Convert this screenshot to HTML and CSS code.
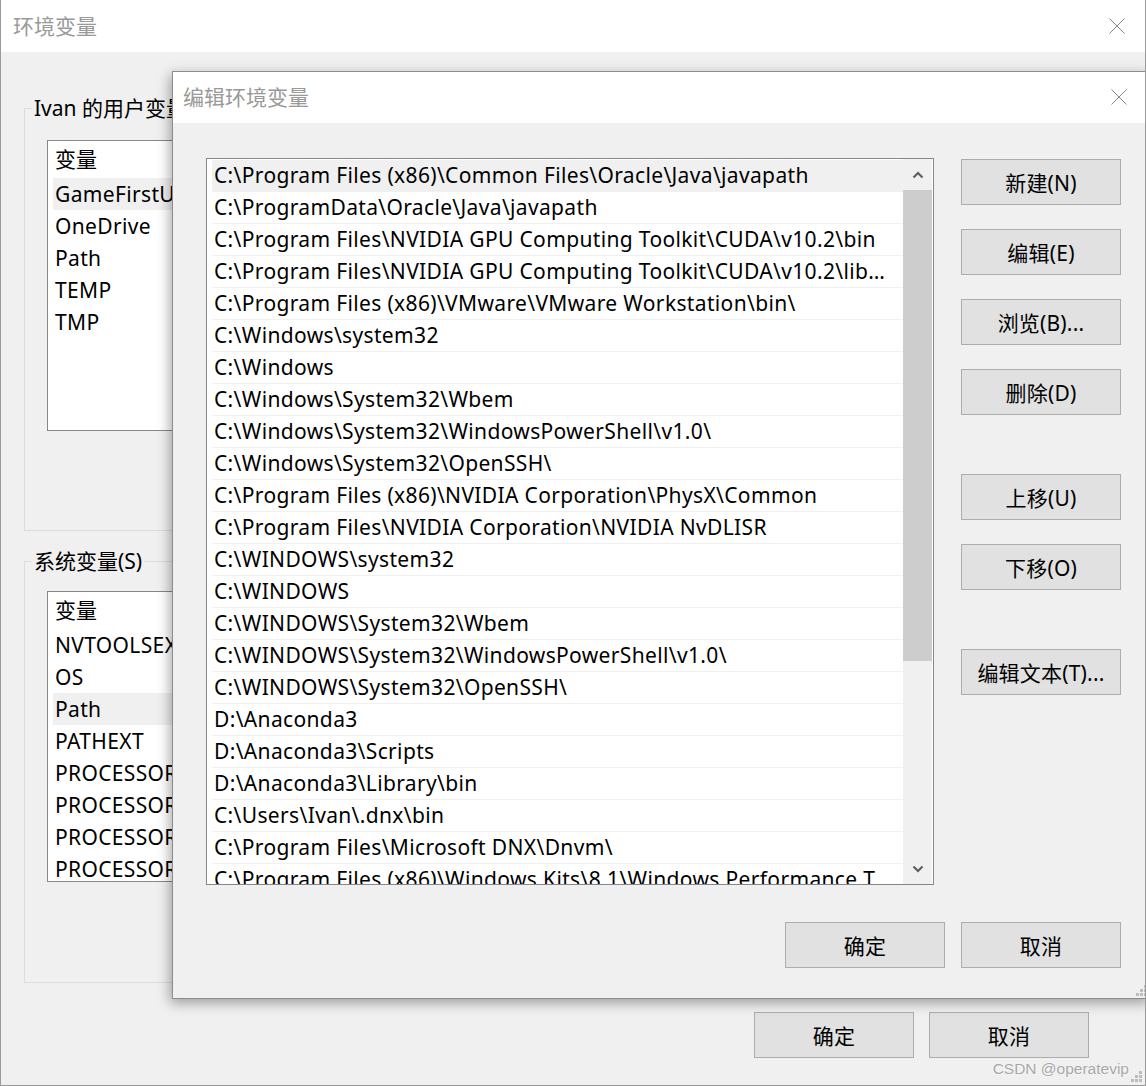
FILE: index.html
```html
<!DOCTYPE html>
<html lang="zh-CN">
<head>
<meta charset="utf-8">
<title>环境变量</title>
<link rel="stylesheet" href="styles.css">
</head>
<body>
<div class="win">
  <div class="titlebar">
    <span class="title">环境变量</span>
    <svg class="close" width="16" height="16" viewBox="0 0 16 16"><path d="M0.5 0.5 L15.5 15.5 M15.5 0.5 L0.5 15.5" stroke="#8a8a8a" stroke-width="1" fill="none"/></svg>
  </div>
  <div class="winbody">
    <div class="group g1">
      <div class="legend">Ivan 的用户变量(U)</div>
      <div class="vlist">
        <div class="vhead">变量</div>
        <div class="vrow sel">GameFirstUpdate</div>
        <div class="vrow">OneDrive</div>
        <div class="vrow">Path</div>
        <div class="vrow">TEMP</div>
        <div class="vrow">TMP</div>
      </div>
    </div>
    <div class="group g2">
      <div class="legend">系统变量(S)</div>
      <div class="vlist">
        <div class="vhead">变量</div>
        <div class="vrow">NVTOOLSEXT_PATH</div>
        <div class="vrow">OS</div>
        <div class="vrow sel">Path</div>
        <div class="vrow">PATHEXT</div>
        <div class="vrow">PROCESSOR_ARCHITECTURE</div>
        <div class="vrow">PROCESSOR_IDENTIFIER</div>
        <div class="vrow">PROCESSOR_LEVEL</div>
        <div class="vrow">PROCESSOR_REVISION</div>
      </div>
    </div>
    <div class="actions outer-actions">
      <button class="btn">确定</button>
      <button class="btn">取消</button>
    </div>
  </div>
  <svg class="grip grip-outer" width="14" height="14" viewBox="0 0 14 14"><g fill="#bdbdbd"><rect x="9" y="1" width="3" height="3"/><rect x="5" y="5" width="3" height="3"/><rect x="9" y="5" width="3" height="3"/><rect x="1" y="9" width="3" height="3"/><rect x="5" y="9" width="3" height="3"/><rect x="9" y="9" width="3" height="3"/></g></svg>
  <div class="watermark">CSDN @operatevip</div>

  <div class="dialog">
    <div class="titlebar dtitle">
      <span class="title">编辑环境变量</span>
      <svg class="close" width="16" height="16" viewBox="0 0 16 16"><path d="M0.5 0.5 L15.5 15.5 M15.5 0.5 L0.5 15.5" stroke="#8a8a8a" stroke-width="1" fill="none"/></svg>
    </div>
    <div class="dbody">
      <div class="plist">
        <div class="prows">
          <div class="prow sel">C:\Program Files (x86)\Common Files\Oracle\Java\javapath</div>
          <div class="prow">C:\ProgramData\Oracle\Java\javapath</div>
          <div class="prow">C:\Program Files\NVIDIA GPU Computing Toolkit\CUDA\v10.2\bin</div>
          <div class="prow">C:\Program Files\NVIDIA GPU Computing Toolkit\CUDA\v10.2\libnvvp</div>
          <div class="prow">C:\Program Files (x86)\VMware\VMware Workstation\bin\</div>
          <div class="prow">C:\Windows\system32</div>
          <div class="prow">C:\Windows</div>
          <div class="prow">C:\Windows\System32\Wbem</div>
          <div class="prow">C:\Windows\System32\WindowsPowerShell\v1.0\</div>
          <div class="prow">C:\Windows\System32\OpenSSH\</div>
          <div class="prow">C:\Program Files (x86)\NVIDIA Corporation\PhysX\Common</div>
          <div class="prow">C:\Program Files\NVIDIA Corporation\NVIDIA NvDLISR</div>
          <div class="prow">C:\WINDOWS\system32</div>
          <div class="prow">C:\WINDOWS</div>
          <div class="prow">C:\WINDOWS\System32\Wbem</div>
          <div class="prow">C:\WINDOWS\System32\WindowsPowerShell\v1.0\</div>
          <div class="prow">C:\WINDOWS\System32\OpenSSH\</div>
          <div class="prow">D:\Anaconda3</div>
          <div class="prow">D:\Anaconda3\Scripts</div>
          <div class="prow">D:\Anaconda3\Library\bin</div>
          <div class="prow">C:\Users\Ivan\.dnx\bin</div>
          <div class="prow">C:\Program Files\Microsoft DNX\Dnvm\</div>
          <div class="prow">C:\Program Files (x86)\Windows Kits\8.1\Windows Performance Toolkit\</div>
        </div>
        <div class="vscroll">
          <div class="sarrow"><svg width="12" height="8" viewBox="0 0 12 8"><path d="M1.5 6.5 L6 2 L10.5 6.5" stroke="#606060" stroke-width="2.2" fill="none"/></svg></div>
          <div class="strack"><div class="sthumb"></div></div>
          <div class="sarrow"><svg width="12" height="8" viewBox="0 0 12 8"><path d="M1.5 1.5 L6 6 L10.5 1.5" stroke="#606060" stroke-width="2.2" fill="none"/></svg></div>
        </div>
      </div>
      <div class="side">
        <button class="btn">新建(N)</button>
        <button class="btn">编辑(E)</button>
        <button class="btn">浏览(B)...</button>
        <button class="btn">删除(D)</button>
        <button class="btn sp">上移(U)</button>
        <button class="btn">下移(O)</button>
        <button class="btn sp">编辑文本(T)...</button>
      </div>
      <div class="actions dactions">
        <button class="btn">确定</button>
        <button class="btn">取消</button>
      </div>
    </div>
    <svg class="grip grip-inner" width="14" height="14" viewBox="0 0 14 14"><g fill="#bdbdbd"><rect x="9" y="1" width="3" height="3"/><rect x="5" y="5" width="3" height="3"/><rect x="9" y="5" width="3" height="3"/><rect x="1" y="9" width="3" height="3"/><rect x="5" y="9" width="3" height="3"/><rect x="9" y="9" width="3" height="3"/></g></svg>
  </div>
</div>
</body>
</html>
```
FILE: styles.css
```css
html, body {
  margin: 0;
  padding: 0;
  overflow: hidden;
  width: 1146px;
  height: 1086px;
  background: #f0f0f0;
}
body {
  font-family: "Noto Sans", "Noto Sans CJK SC", sans-serif;
  font-size: 21px;
  letter-spacing: 0.35px;
  color: #000;
}
.win {
  position: relative;
  width: 1146px;
  height: 1086px;
  box-sizing: border-box;
  border: 1px solid #9a9a9a;
  border-top: none;
  background: #f0f0f0;
  overflow: hidden;
}
.titlebar {
  height: 52px;
  box-sizing: border-box;
  background: #fff;
  display: flex;
  align-items: center;
  justify-content: space-between;
  padding: 0 20px 2px 12px;
}
.title {
  color: #999;
  font-family: "Noto Sans CJK SC", sans-serif;
  font-size: 21px;
  letter-spacing: 0;
}
.close { margin-top: 2px; }
.winbody {
  padding: 56px 56px 0 23px;
}
.group {
  border: 1px solid #dcdcdc;
  width: 1098px;
  box-sizing: border-box;
}
.g1 { height: 423px; }
.g2 { height: 422px; margin-top: 30px; }
.legend {
  display: block;
  width: fit-content;
  background: #f0f0f0;
  line-height: 26px;
  height: 26px;
  margin: -14px 0 0 7px;
  padding: 0 2px;
  letter-spacing: 0;
}
.vlist {
  margin: 19px 0 0 22px;
  width: 1000px;
  height: 291px;
  box-sizing: border-box;
  border: 1px solid #828790;
  background: #fff;
  padding: 0 5px;
  overflow: hidden;
}
.g2 .vlist { margin-top: 17px; }
.vhead {
  height: 37px;
  line-height: 37px;
  padding-left: 2px;
  letter-spacing: 0;
}
.vrow {
  height: 32px;
  line-height: 32px;
  padding-left: 2px;
  white-space: nowrap;
}
.sel { background: #f0f0f0; }
.actions {
  display: flex;
  justify-content: flex-end;
  gap: 15px;
}
.outer-actions { margin-top: 29px; }
.btn {
  width: 160px;
  height: 46px;
  box-sizing: border-box;
  border: 1px solid #adadad;
  background: #e1e1e1;
  font-family: "Noto Sans", "Noto Sans CJK SC", sans-serif;
  font-size: 21px;
  letter-spacing: 0.2px;
  color: #000;
  padding: 0;
  margin: 0;
}
.grip { position: absolute; }
.grip-outer { right: 1px; bottom: 1px; }
.watermark {
  position: absolute;
  right: 16px;
  bottom: 7px;
  font-family: "Liberation Sans", sans-serif;
  font-size: 15.5px;
  letter-spacing: 0;
  color: #a8a8a8;
  text-shadow: 0 0 2px #fff;
}
.dialog {
  position: absolute;
  left: 171px;
  top: 71px;
  width: 979px;
  height: 928px;
  box-sizing: border-box;
  border: 1px solid #8c8c8c;
  background: #f0f0f0;
  box-shadow: -2px 4px 12px rgba(0,0,0,0.35);
}
.dtitle { height: 51px; padding-right: 23px; padding-left: 10px; padding-bottom: 3px; }
.dbody {
  display: grid;
  grid-template-columns: 728px 160px;
  column-gap: 27px;
  padding: 35px 30px 0 33px;
}
.plist {
  height: 727px;
  box-sizing: border-box;
  border: 1px solid #828790;
  background: #fff;
  display: flex;
  overflow: hidden;
}
.prows {
  flex: 1;
  min-width: 0;
  padding: 1px 0 0 5px;
  overflow: hidden;
}
.prow {
  height: 32px;
  box-sizing: border-box;
  line-height: 31px;
  border-bottom: 1px solid #f0f0f0;
  padding: 0 11px 0 2px;
  white-space: nowrap;
  overflow: hidden;
  text-overflow: ellipsis;
}
.vscroll {
  width: 29px;
  margin-right: 1px;
  background: #f0f0f0;
  display: flex;
  flex-direction: column;
}
.sarrow {
  height: 31px;
  display: flex;
  align-items: center;
  justify-content: center;
}
.strack { flex: 1; }
.sthumb {
  height: 471px;
  background: #cdcdcd;
}
.side {
  display: flex;
  flex-direction: column;
  gap: 24px;
  padding-top: 1px;
}
.side .sp { margin-top: 35px; }
.dactions {
  grid-column: 1 / 3;
  margin-top: 37px;
  gap: 16px;
}
.grip-inner { right: 1px; bottom: 0px; }
```
